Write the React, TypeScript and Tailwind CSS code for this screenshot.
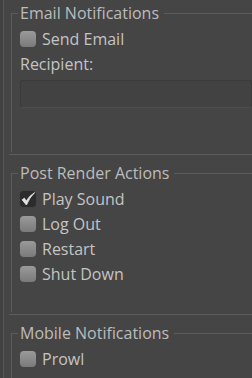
import React from "react";

const CheckIcon = () => (
  <svg width="16" height="16" viewBox="0 0 16 16" className="shrink-0">
    <path
      d="M2.2 8.8 L4.4 7.2 L6.2 10.2 Q9 5 14.6 1.6 Q9.6 6.2 6.4 14 Z"
      fill="#e4e4e4"
      stroke="#e4e4e4"
      strokeWidth="0.9"
      strokeLinejoin="round"
    />
  </svg>
);

const Checkbox: React.FC<{ label: string; checked?: boolean }> = ({ label, checked }) => (
  <div className="flex items-center h-[25px] gap-[6px] shrink-0">
    {checked ? (
      <span className="w-4 h-4 rounded-[4px] bg-[#2c2c2c] shadow-[0_0_1px_#333] flex items-center justify-center">
        <CheckIcon />
      </span>
    ) : (
      <span className="w-4 h-4 rounded-[4px] bg-gradient-to-b from-[#9a9a9a] to-[#7a7a7a] shadow-[0_0_1px_#555]" />
    )}
    <span className="leading-none">{label}</span>
  </div>
);

const Group: React.FC<{ title: string; height: string; children: React.ReactNode }> = ({
  title,
  height,
  children,
}) => (
  <div className="flex flex-col shrink-0">
    <div className="flex items-center h-[26px] shrink-0">
      <div className="ml-[2px] w-[7px] h-[13px] self-end border-l border-t border-[#5c5c5c]" />
      <span className="px-[2px] text-[#bcbcbc] leading-none">{title}</span>
      <div className="ml-[3px] flex-1 h-[13px] self-end border-t border-[#5c5c5c]" />
    </div>
    <div className={`ml-[2px] border-l border-[#5c5c5c] pl-[8px] shrink-0 ${height}`}>{children}</div>
  </div>
);

const Separator = () => <div className="h-px shrink-0 bg-[#5c5c5c]" />;

export default function App() {
  return (
    <div className="w-[252px] h-[378px] bg-[#454545] overflow-hidden flex font-['Open_Sans',sans-serif] text-[16px] text-[#c4c4c4]">
      <div className="w-[3px] bg-[#414141]" />
      <div className="w-px bg-[#575757]" />
      <div className="flex-1 flex flex-col pl-[5px]">
        <Group title="Email Notifications" height="h-[126px]">
          <Checkbox label="Send Email" />
          <div className="h-[26px] flex items-center leading-none">Recipient:</div>
          <div className="mt-[3px] h-[28px] rounded-[3px] bg-[#424242] border border-[#3a3a3a] border-b-[#4e4e4e]" />
        </Group>
        <div className="h-[2px] shrink-0" />
        <Separator />
        <div className="h-[5px] shrink-0" />
        <Group title="Post Render Actions" height="h-[126px]">
          <Checkbox label="Play Sound" checked />
          <Checkbox label="Log Out" />
          <Checkbox label="Restart" />
          <Checkbox label="Shut Down" />
        </Group>
        <div className="h-[2px] shrink-0" />
        <Separator />
        <div className="h-[5px] shrink-0" />
        <Group title="Mobile Notifications" height="h-[40px]">
          <Checkbox label="Prowl" />
        </Group>
      </div>
    </div>
  );
}
